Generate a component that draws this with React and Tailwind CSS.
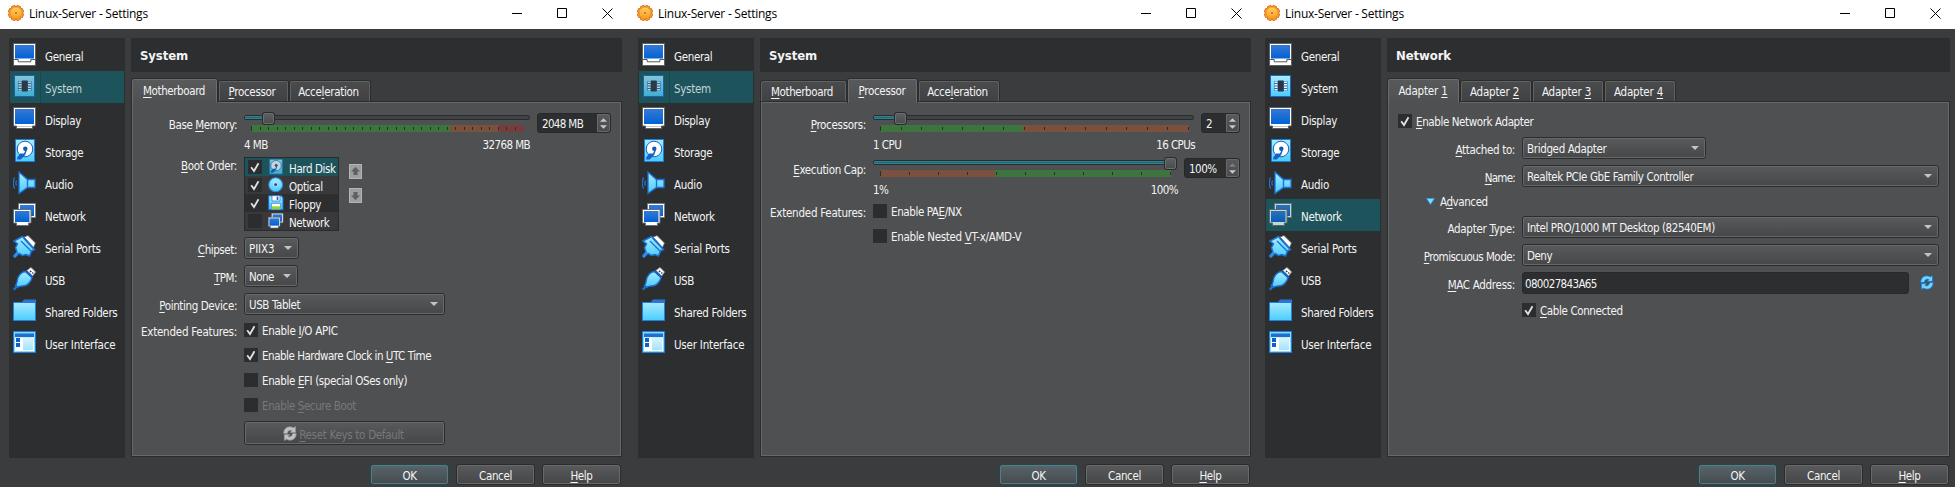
import React from "react";

/* Text with "&" marking the mnemonic letter, as in Qt labels. */
function T({ children, className = "tracking-[-0.35px]" }) {
  const i = children.indexOf("&");
  if (i < 0) return <span className={`whitespace-nowrap ${className}`}>{children}</span>;
  return (
    <span className={`whitespace-nowrap ${className}`}>
      {children.slice(0, i)}
      <span className="underline decoration-1 underline-offset-[2px] [text-decoration-skip-ink:none]">{children[i + 1]}</span>
      {children.slice(i + 2)}
    </span>
  );
}

function Defs() {
  return (
    <svg width="0" height="0" className="absolute">
      <defs>
        <linearGradient id="blue" x1="0" y1="0" x2="0" y2="1">
          <stop offset="0" stopColor="#3579d3" />
          <stop offset="1" stopColor="#0062d6" />
        </linearGradient>
        <linearGradient id="cyan" x1="0" y1="0" x2="0" y2="1">
          <stop offset="0" stopColor="#a8ecff" />
          <stop offset="1" stopColor="#4accff" />
        </linearGradient>
        <linearGradient id="orange" x1="0" y1="0" x2="0" y2="1">
          <stop offset="0" stopColor="#ffcf5a" />
          <stop offset="1" stopColor="#f99a1c" />
        </linearGradient>
        <linearGradient id="pale" x1="0" y1="0" x2="0" y2="1">
          <stop offset="0" stopColor="#d8f3ff" />
          <stop offset="1" stopColor="#a4e2fb" />
        </linearGradient>
      </defs>
    </svg>
  );
}

const glyphs = {
  General: (
    <>
      <path d="M.5.5h22v22H.5z" fill="#fff" stroke="#5f6062" />
      <path d="M2 2h19v13.5H2z" fill="url(#blue)" />
      <path d="M1 16.5h4.2v2.3h12.6v-2.3H22" fill="none" stroke="#55575a" />
    </>
  ),
  System: (
    <>
      <path d="M1.5.5h20v21h-20z" fill="url(#cyan)" stroke="#1668cc" />
      <path d="M5 6h4.500v10H5zM14 6h4.500v10H14z" fill="#2b6fb8" />
      <path d="M5.500 6.500h3v1.500h-3zM5.500 9h3v1.500h-3zM5.500 11.500h3v1.500h-3zM5.500 14h3v1.500h-3zM15 6.500h3v1.500h-3zM15 9h3v1.500h-3zM15 11.500h3v1.500h-3zM15 14h3v1.500h-3z" fill="#e9f6fb" />
      <path d="M9 5.500h5.500v11H9z" fill="#2b3440" />
    </>
  ),
  Display: (
    <>
      <path d="M.5.5h22v18.500h-3v2.500h-16v-2.500h-3z" fill="#fff" stroke="#5f6062" />
      <path d="M2 2h19v15H2z" fill="url(#blue)" />
      <path d="M4 19.500h15" stroke="#c9c9c9" />
    </>
  ),
  Storage: (
    <>
      <path d="M2.500.5h19v22h-19z" fill="url(#cyan)" stroke="#1c7fe0" />
      <circle cx="12" cy="10" r="7.800" fill="#fff" stroke="#1463bd" strokeWidth="1" />
      <circle cx="12.300" cy="9.800" r="2.200" fill="#1458ae" />
      <path d="M4.200 18.500l3-4h3.800l1.500-3.500 1.300.6-1.600 4.400-4.500 4.600H4.200z" fill="#1562c4" />
    </>
  ),
  Audio: (
    <>
      <path d="M6 1l8.500 7.500h7.500v8h-7.500L6 22.500z" fill="url(#cyan)" stroke="#1b70d2" strokeWidth="1.300" />
      <path d="M14.500 8.500v8" stroke="#1b70d2" strokeWidth="1.400" />
      <path d="M3.600 9.500c-.9 1.500-.9 3.500 0 5M1.600 6.500c-1.500 3-1.500 8 0 11" fill="none" stroke="#2377d6" strokeWidth="1.300" />
    </>
  ),
  Network: (
    <>
      <path d="M5.500.5h17v14h-17z" fill="#fff" stroke="#7b7c7e" />
      <path d="M7 2h14v11H7z" fill="url(#blue)" />
      <path d="M.5 6.500h17.500v13.500h-2.500v2.500H3.500V20h-3z" fill="#fff" stroke="#6b6c6e" />
      <path d="M2 8h14.500v11H2z" fill="url(#blue)" />
    </>
  ),
  "Serial Ports": (
    <>
      <path d="M11 2l4-1.500L22.500 8l-2 4.500z" fill="#fff" stroke="#5d6a78" strokeWidth=".8" />
      <path d="M1 6l8.500-4.500 12 13-3 1.500-2 5-3.500-1.500-3.500 1-3.500-2L2 22l-1-1.500 3-3.500-1.500-4.500L4.500 9z" fill="url(#cyan)" stroke="#1b70d2" strokeWidth="1.500" />
      <path d="M8 6l11 11M11 3.500l9.500 10" stroke="#1b70d2" strokeWidth="1.400" />
      <path d="M1 22l4-4.500" stroke="#2f8eea" strokeWidth="2.500" />
    </>
  ),
  USB: (
    <>
      <path d="M14 3.500L18 .5l4.500 4.500-3 4z" fill="#fff" stroke="#a5a7aa" strokeWidth=".8" />
      <path d="M17 3.700l1.300 1.300M19.300 5.500l1 1" stroke="#444" strokeWidth="1.500" />
      <path d="M12.500 4.500L19 10.500c-1 5-5 8.500-9.500 8.500-3 0-4 .5-5 1.500l-2-2c1-1 1.500-2.500 1.800-5 .6-4.500 3.700-8.500 8.200-9z" fill="url(#cyan)" stroke="#1b70d2" strokeWidth="1.400" />
      <path d="M.8 22.800l3.500-4" stroke="#1b70d2" strokeWidth="2.200" />
      <path d="M12.500 3.800l7 6.500" stroke="#1562c4" strokeWidth="2" />
    </>
  ),
  "Shared Folders": (
    <>
      <path d="M.5 3.500h22v18H.5z" fill="url(#cyan)" stroke="#1b84e6" />
      <path d="M8 4L11 .5h12V4z" fill="#2c74d6" />
    </>
  ),
  "User Interface": (
    <>
      <path d="M.5.5h22v21H.5z" fill="#7fdcff" stroke="#1c7fe0" />
      <path d="M2 2.500h19v3.500H2z" fill="#1f6fd0" />
      <path d="M2 6.500h19v13.500H2z" fill="#fff" />
      <path d="M3 7h4v4H3zM3 12h4v4H3z" fill="#0f5fc8" />
      <path d="M10 7h10v12H10z" fill="url(#pale)" />
    </>
  ),
  Optical: (
    <>
      <circle cx="11.500" cy="11.500" r="10.300" fill="url(#cyan)" stroke="#2f8fe8" strokeWidth="1.600" />
      <circle cx="11.500" cy="11.500" r="3" fill="#1457a8" stroke="#d5f3ff" strokeWidth="1.300" />
    </>
  ),
  Floppy: (
    <>
      <path d="M1 1h19l2.500 3v18H1z" fill="url(#cyan)" stroke="#1668cc" strokeWidth="1.600" />
      <path d="M6 1h12v8H6z" fill="#fff" stroke="#1668cc" />
      <path d="M13 2.500h2.500v5H13z" fill="#1668cc" />
      <path d="M5 12.500h14V22H5z" fill="#fff" stroke="#1668cc" />
      <path d="M6 17h12v4H6z" fill="#8edb1e" />
    </>
  ),
};

function Icon({ name, className = "" }) {
  return (
    <svg viewBox="0 0 24 24" className={`shrink-0 ${className}`}>
      {glyphs[name]}
    </svg>
  );
}

function Gear() {
  const teeth = [0, 45, 90, 135, 180, 225, 270, 315];
  return (
    <svg viewBox="0 0 16 16" className="h-4 w-4 shrink-0">
      {teeth.map((a) => (
        <rect key={a} x="6" y=".4" width="4" height="4" rx="1" fill="#f9a72a" stroke="#d9691a" strokeWidth=".9" transform={`rotate(${a + 22.5} 8 8)`} />
      ))}
      <circle cx="8" cy="8" r="6" fill="url(#orange)" stroke="#e58a20" strokeWidth=".7" />
      <circle cx="8" cy="8" r="1.500" fill="#c9561a" stroke="#ffd98a" strokeWidth=".7" />
    </svg>
  );
}

function Refresh({ className = "", fill, stroke }) {
  return (
    <svg viewBox="0 0 15 16" className={`shrink-0 ${className}`}>
      <path d="M.7 8C.7 3.800 3.500.8 7.300.8c1.500 0 2.700.4 3.700 1.100L13.500.6v6.200H7.600l1.800-1.900C7.200 3.800 5 5 4.700 8z" fill={fill} stroke={stroke} strokeWidth=".8" />
      <path d="M14.200 8c0 4.200-2.800 7.200-6.600 7.200-1.500 0-2.700-.4-3.700-1.100L1.400 15.400V9.200h5.900l-1.800 1.900c2.200 1.100 4.400-.1 4.700-3.100z" fill={fill} stroke={stroke} strokeWidth=".8" />
    </svg>
  );
}

function TitleBar({ pad }) {
  return (
    <div className={`flex h-[29px] items-center bg-white pl-2 ${pad}`}>
      <div className="mb-[3px]"><Gear /></div>
      <span className="mb-[2px] ml-[5px] whitespace-nowrap font-['Open_Sans',sans-serif] text-[12px] leading-4 tracking-[-0.25px] text-black [font-stretch:normal]">Linux-Server - Settings</span>
      <svg viewBox="0 0 101 11" className="mb-[3px] ml-auto h-[11px] w-[101px]" fill="none" stroke="#000">
        <path d="M0 5.500h10M45.500.5h9v9h-9z" />
        <path d="M90.500.5l10 10M100.500.5l-10 10" />
      </svg>
    </div>
  );
}

const sections = [
  ["General", "tracking-[-0.35px]"],
  ["System", "tracking-[-0.3px]"],
  ["Display", "tracking-[-0.3px]"],
  ["Storage", "tracking-[-0.3px]"],
  ["Audio", "tracking-[-0.3px]"],
  ["Network", "tracking-[-0.35px]"],
  ["Serial Ports", "tracking-[-0.23px]"],
  ["USB", "tracking-[-0.5px]"],
  ["Shared Folders", "tracking-[-0.33px]"],
  ["User Interface", "tracking-[-0.2px]"],
];

function Sidebar({ active }) {
  return (
    <nav className="flex h-[420px] w-[116px] shrink-0 flex-col bg-[#2d2e30] p-px">
      {sections.map(([name, track]) => {
        const on = name === active;
        return (
          <div key={name} className={`flex h-8 items-center ${on ? "bg-[#1d545c]" : ""}`}>
            <div className={`flex h-8 w-[31px] items-center pl-[3px] ${on && name === "System" ? "border-r border-[#18484f]" : ""}`}>
              <Icon name={name} className={`h-6 w-6 ${on ? "opacity-75" : ""}`} />
            </div>
            <span className={`pl-1 pt-[3px] leading-4 ${on && name === "System" ? "text-[#c3d3d5]" : ""}`}>
              <T className={track}>{name}</T>
            </span>
          </div>
        );
      })}
    </nav>
  );
}

function Tabs({ items, active }) {
  return (
    <div className="relative z-10 -mb-[2px] flex h-[25px] items-end">
      {items.map(([label, width, track], i) =>
        i === active ? (
          <div key={label} className={`h-[25px] shrink-0 rounded-t-[3px] border border-b-0 border-[#2b2c2e] ${width}`}>
            <div className="flex h-6 items-center justify-center rounded-t-[2px] border border-b-0 border-[#6b6c6e] bg-gradient-to-b from-[#58595b] to-[#4f5052] pr-px">
              <T className={track}>{label}</T>
            </div>
          </div>
        ) : (
          <div key={label} className={`mb-[2px] h-[21px] shrink-0 rounded-t-[3px] border border-b-0 border-[#2b2c2e] ${width}`}>
            <div className="flex h-5 items-center justify-center rounded-t-[2px] border border-b-0 border-[#606163] bg-gradient-to-b from-[#4a4b4d] to-[#404143] pr-[3px] pt-[2px]">
              <T className={track}>{label}</T>
            </div>
          </div>
        )
      )}
    </div>
  );
}

function Button({ children, className = "", primary }) {
  return (
    <div className={`flex rounded-[3px] border p-0 ${primary ? "border-[#1d4a51]" : "border-[#2b2c2e]"} ${className}`}>
      <div className={`flex flex-1 items-center justify-center rounded-[2px] border bg-gradient-to-b pt-[2px] leading-4 ${primary ? "border-[#5c7a7e] from-[#57646a] to-[#454c50]" : "border-[#67686a] from-[#58595b] to-[#464749]"}`}>
        {children}
      </div>
    </div>
  );
}

function Combo({ children, className = "", track }) {
  return (
    <div className={`flex h-[22px] rounded-[3px] border border-[#2b2c2e] ${className}`}>
      <div className="flex flex-1 items-center justify-between rounded-[2px] border border-[#67686a] bg-gradient-to-b from-[#58595b] to-[#47484a] pl-[3px] pr-[5px] leading-4">
        <span className="pt-[2px]"><T className={track}>{children}</T></span>
        <svg viewBox="0 0 8 4" className="h-1 w-2"><path d="M0 0h8L4 4z" fill="#c4c4c4" /></svg>
      </div>
    </div>
  );
}

function Check({ on }) {
  return (
    <div className="flex h-[14px] w-[14px] shrink-0 items-center justify-center bg-[#2c2d2f]">
      {on && (
        <svg viewBox="0 0 10 11" className="h-[11px] w-[10px]">
          <path d="M1.200 5.200L4 9 8.500 1.200" fill="none" stroke="#e2e2e2" strokeWidth="1.800" />
        </svg>
      )}
    </div>
  );
}

function CheckRow({ on, label, track, className = "" }) {
  return (
    <div className={`flex h-[14px] items-center gap-1 leading-4 ${className}`}>
      <Check on={on} />
      <span className="pt-[2px]"><T className={track}>{label}</T></span>
    </div>
  );
}

function Spin({ children, className = "", topDim, track }) {
  return (
    <div className={`flex h-5 rounded-[3px] border border-[#27282a] bg-[#2d2e30] ${className}`}>
      <div className="flex flex-1 items-center pl-1 pt-[2px] leading-4"><T className={track}>{children}</T></div>
      <div className="flex w-[13px] flex-col items-center justify-center gap-[3px] rounded-r-[2px] border border-[#67686a] bg-gradient-to-b from-[#59595b] to-[#4a4b4d]">
        <svg viewBox="0 0 8 4" className="h-1 w-[7px]"><path d="M0 4h8L4 0z" fill={topDim ? "#7b7c7e" : "#c8c8c8"} /></svg>
        <svg viewBox="0 0 8 4" className="h-1 w-[7px]"><path d="M0 0h8L4 4z" fill="#c8c8c8" /></svg>
      </div>
    </div>
  );
}

/* Groove with handle, and the graded scale bar under it. */
function Slider({ width, barWidth, handle, zones, ticks, pitch }) {
  return (
    <div className={`shrink-0 pt-[2px] ${width}`}>
      <div className="relative h-[5px] rounded-[2px] border border-[#2b2c2e] bg-[#424345]">
        <div className="h-[3px] border-y border-[#2d8490] bg-[#266670]" style={{ width: handle }} />
        <div className="absolute -top-[4px] h-[13px] w-[13px] rounded-[3px] border border-[#2a2b2d] bg-[#2a2b2d]" style={{ left: handle }}>
          <div className="h-[11px] w-[11px] rounded-[2px] border border-[#6b6c6e] bg-gradient-to-b from-[#5d5e60] to-[#4c4d4f]" />
        </div>
      </div>
      <svg className={`ml-[7px] mt-[5px] block h-[7px] ${barWidth}`}>
        {zones.map(([x, w, c]) => <rect key={x} x={x} y="0" width={w} height="7" fill={c} />)}
        {Array.from({ length: ticks }, (_, i) => (
          <rect key={i} x={Math.round(i * pitch)} y={i ? 2 : 1} width="1" height={i ? 3 : 5} fill="#26302a" />
        ))}
      </svg>
    </div>
  );
}

function Row({ label, track, labelWidth = "w-[104px]", labelHeight = "h-[22px]", labelPad = "pt-[3px]", className = "", children }) {
  return (
    <div className={`flex ${className}`}>
      <div className={`mr-[7px] flex shrink-0 items-center justify-end leading-4 ${labelPad} ${labelWidth} ${labelHeight}`}>
        {label && <T className={track}>{label}</T>}
      </div>
      {children}
    </div>
  );
}

function Range({ width, min, max }) {
  return (
    <Row labelHeight="h-[18px]">
      <div className={`flex h-[18px] items-center justify-between pt-px leading-4 ${width}`}>
        <T className="tracking-[-0.55px]">{min}</T>
        <T className="tracking-[-0.6px]">{max}</T>
      </div>
    </Row>
  );
}

const boot = [
  ["Hard Disk", "Storage", true, "bg-[#1d545c]"],
  ["Optical", "Optical", true, "bg-[#39393c]"],
  ["Floppy", "Floppy", true, "bg-[#2d2e30]"],
  ["Network", "Network", false, "bg-[#39393c]"],
];

function Motherboard() {
  return (
    <div className="flex flex-col pt-[10px]">
      <Row label="Base &Memory:" track="tracking-[-0.42px]" labelPad="pt-px">
        <Slider width="w-[286px]" barWidth="w-[273px]" handle={17} ticks={32} pitch={8.5}
          zones={[[0, 199, "#3c753d"], [199, 48, "#7b503e"], [247, 26, "#7a3b3c"]]} />
        <Spin className="ml-[7px] w-[74px]" track="tracking-[-0.65px]">2048 MB</Spin>
      </Row>
      <Range width="w-[286px]" min="4 MB" max="32768 MB" />
      <Row label="&Boot Order:" labelHeight="h-4" labelPad="pt-px" className="mt-1">
        <div className="h-[74px] w-[95px] border border-[#2a2b2d]">
          {boot.map(([name, icon, on, bg]) => (
            <div key={name} className={`flex h-[18px] items-center pl-[3px] leading-4 ${bg}`}>
              <Check on={on} />
              <Icon name={icon} className={`ml-[6px] mr-[5px] h-4 w-4 ${icon === "Storage" ? "opacity-75" : ""}`} />
              <span className="pt-[3px]"><T className="tracking-[-0.4px]">{name}</T></span>
            </div>
          ))}
        </div>
        <div className="ml-[10px] mt-[7px] flex flex-col gap-[9px]">
          {["M6.500 3L11 7.500H8.500V11h-4V7.500H2z", "M6.500 12L2 7.500h2.500V4h4v3.500H11z"].map((d) => (
            <svg key={d} viewBox="0 0 13 15" className="h-[15px] w-[13px]">
              <path d="M0 0h13v15H0z" fill="#9e9e9e" />
              <path d="M.5.5h12v14H.5z" fill="none" stroke="#b5b5b5" />
              <path d={d} fill="#5f6062" />
            </svg>
          ))}
        </div>
      </Row>
      <Row label="&Chipset:" track="tracking-[-0.42px]" className="mt-[6px]"><Combo className="w-[55px]" track="tracking-[-0.1px]">PIIX3</Combo></Row>
      <Row label="&TPM:" track="tracking-[-0.5px]" className="mt-[6px]"><Combo className="w-[54px]" track="tracking-[-0.5px]">None</Combo></Row>
      <Row label="&Pointing Device:" track="tracking-[-0.38px]" className="mt-[6px]"><Combo className="w-[201px]" track="tracking-[-0.4px]">USB Tablet</Combo></Row>
      <Row label="Extended Features:" track="tracking-[-0.24px]" labelHeight="h-[14px]" className="mt-2">
        <div className="flex flex-col">
          <CheckRow on label="Enable &I/O APIC" track="tracking-[-0.3px]" />
          <CheckRow on label="Enable Hardware Clock in &UTC Time" track="tracking-[-0.48px]" className="mt-[11px]" />
          <CheckRow label="Enable &EFI (special OSes only)" track="tracking-[-0.38px]" className="mt-[11px]" />
          <CheckRow label="Enable &Secure Boot" track="tracking-[-0.4px]" className="mt-[11px] text-[#77787a]" />
          <Button className="mt-[9px] h-6 w-[201px]">
            <Refresh className="mb-[2px] mr-[2px] h-[15px] w-[14px]" fill="#c2c2c2" stroke="#8f8f8f" />
            <span className="mr-[2px] pt-px text-[#77787a]"><T className="tracking-[-0.3px]">&Reset Keys to Default</T></span>
          </Button>
        </div>
      </Row>
    </div>
  );
}

function Processor() {
  return (
    <div className="flex flex-col pt-[10px]">
      <Row label="&Processors:" track="tracking-[-0.3px]" labelPad="pt-px">
        <Slider width="w-[321px]" barWidth="w-[309px]" handle={20} ticks={16} pitch={20.5}
          zones={[[0, 143, "#3c753d"], [143, 166, "#7b503e"]]} />
        <Spin className="ml-[7px] w-[39px]">2</Spin>
      </Row>
      <Range width="w-[322px]" min="1 CPU" max="16 CPUs" />
      <Row label="&Execution Cap:" track="tracking-[-0.35px]" labelPad="pt-px" className="mt-[5px]">
        <Slider width="w-[304px]" barWidth="w-[291px]" handle={290} ticks={11} pitch={29}
          zones={[[0, 115, "#7b503e"], [115, 176, "#3c753d"]]} />
        <Spin className="ml-[7px] w-[56px]" topDim track="tracking-[-0.5px]">100%</Spin>
      </Row>
      <Range width="w-[305px]" min="1%" max="100%" />
      <Row label="Extended Features:" track="tracking-[-0.24px]" labelHeight="h-[14px]" className="mt-[6px]">
        <div className="flex flex-col gap-[11px]">
          <CheckRow label="Enable PA&E/NX" track="tracking-[-0.4px]" />
          <CheckRow label="Enable Nested &VT-x/AMD-V" track="tracking-[-0.33px]" />
        </div>
      </Row>
    </div>
  );
}

function Network() {
  const w = "w-[126px]";
  return (
    <div className="flex flex-col pt-[11px]">
      <CheckRow on label="&Enable Network Adapter" track="tracking-[-0.4px]" className="pl-[9px]" />
      <Row label="&Attached to:" labelWidth={w} className="mt-[9px]"><Combo className="w-[184px]" track="tracking-[-0.35px]">Bridged Adapter</Combo></Row>
      <Row label="&Name:" track="tracking-[-0.75px]" labelWidth={w} className="mt-[6px]"><Combo className="w-[417px]" track="tracking-[-0.4px]">Realtek PCIe GbE Family Controller</Combo></Row>
      <div className="mt-[6px] flex h-[17px] items-center gap-[5px] pl-[37px] pt-px leading-4">
        <svg viewBox="0 0 9 7" className="mb-px h-[7px] w-[9px]"><path d="M.3.3h8.400L4.500 6.500z" fill="#7fdcff" stroke="#2a86e8" strokeWidth=".8" /></svg>
        <T className="tracking-[-0.42px]">A&dvanced</T>
      </div>
      <Row label="Adapter &Type:" track="tracking-[-0.3px]" labelWidth={w} className="mt-[6px]"><Combo className="w-[417px]" track="tracking-[-0.4px]">Intel PRO/1000 MT Desktop (82540EM)</Combo></Row>
      <Row label="&Promiscuous Mode:" track="tracking-[-0.53px]" labelWidth={w} className="mt-[6px]"><Combo className="w-[417px]" track="tracking-[-0.5px]">Deny</Combo></Row>
      <Row label="&MAC Address:" track="tracking-[-0.3px]" labelWidth={w} className="mt-[6px]">
        <div className="flex h-[22px] w-[387px] items-center rounded-[3px] border border-[#29292b] bg-[#2d2e30] pl-[2px] pt-[2px] leading-4">
          <T className="tracking-[-0.65px]">080027843A65</T>
        </div>
        <Refresh className="ml-[11px] mt-[3px] h-[15px] w-[14px]" fill="#6cd8ff" stroke="#1668cc" />
      </Row>
      <Row labelWidth={w} labelHeight="h-[14px]" className="mt-[9px]"><CheckRow on label="&Cable Connected" track="tracking-[-0.38px]" /></Row>
    </div>
  );
}

function Window({ width, pad, titlePad, footPad, active, tabs, tab, children }) {
  return (
    <section className={`flex h-[487px] shrink-0 flex-col bg-[#3b3c3e] ${width}`}>
      <TitleBar pad={titlePad} />
      <div className={`flex pl-[9px] pt-[9px] ${pad}`}>
        <Sidebar active={active} />
        <main className="ml-[6px] flex min-w-0 flex-1 flex-col">
          <h1 className="mb-[6px] flex h-[34px] items-center bg-[#2d2e30] pl-[9px] pt-px text-[13px] font-bold leading-4 tracking-[-0.1px]">{active}</h1>
          <Tabs items={tabs} active={tab} />
          <div className="h-[356px] border border-[#2b2c2e]">
            <div className="h-full border border-[#67686a] bg-[#4f5052]">{children}</div>
          </div>
        </main>
      </div>
      <footer className={`mt-[6px] flex justify-end gap-[7px] ${footPad}`}>
        <Button primary className="h-[21px] w-[79px]"><T>OK</T></Button>
        <Button className="h-[21px] w-[79px]"><T>Cancel</T></Button>
        <Button className="h-[21px] w-[79px]"><T>&Help</T></Button>
      </footer>
    </section>
  );
}

const systemTabs = [
  ["&Motherboard", "w-[87px]", "tracking-[-0.4px]"],
  ["&Processor", "w-[71px]", "tracking-[-0.3px]"],
  ["Acce&leration", "w-[82px]", "tracking-[-0.3px]"],
];
const adapterTabs = [
  ["Adapter &1", "w-[73px]", "tracking-[-0.2px]"],
  ["Adapter &2", "w-[72px]", "tracking-[-0.2px]"],
  ["Adapter &3", "w-[72px]", "tracking-[-0.2px]"],
  ["Adapter &4", "w-[72px]", "tracking-[-0.2px]"],
];

export default function App() {
  return (
    <div className="flex h-[487px] w-[1955px] overflow-hidden bg-[#3b3c3e] font-['DejaVu_Sans_Condensed','DejaVu_Sans',sans-serif] text-[11.5px] text-[#f4f4f4] [font-stretch:condensed]">
      <Defs />
      <Window width="w-[629px]" pad="pr-[7px]" footPad="pr-[8px]" titlePad="pr-[16px]" active="System" tabs={systemTabs} tab={0}><Motherboard /></Window>
      <Window width="w-[627px]" pad="pr-[5px]" footPad="pr-[6px]" titlePad="pr-[14px]" active="System" tabs={systemTabs} tab={1}><Processor /></Window>
      <Window width="w-[699px]" pad="pr-[5px]" footPad="pr-[6px]" titlePad="pr-[14px]" active="Network" tabs={adapterTabs} tab={0}><Network /></Window>
    </div>
  );
}
